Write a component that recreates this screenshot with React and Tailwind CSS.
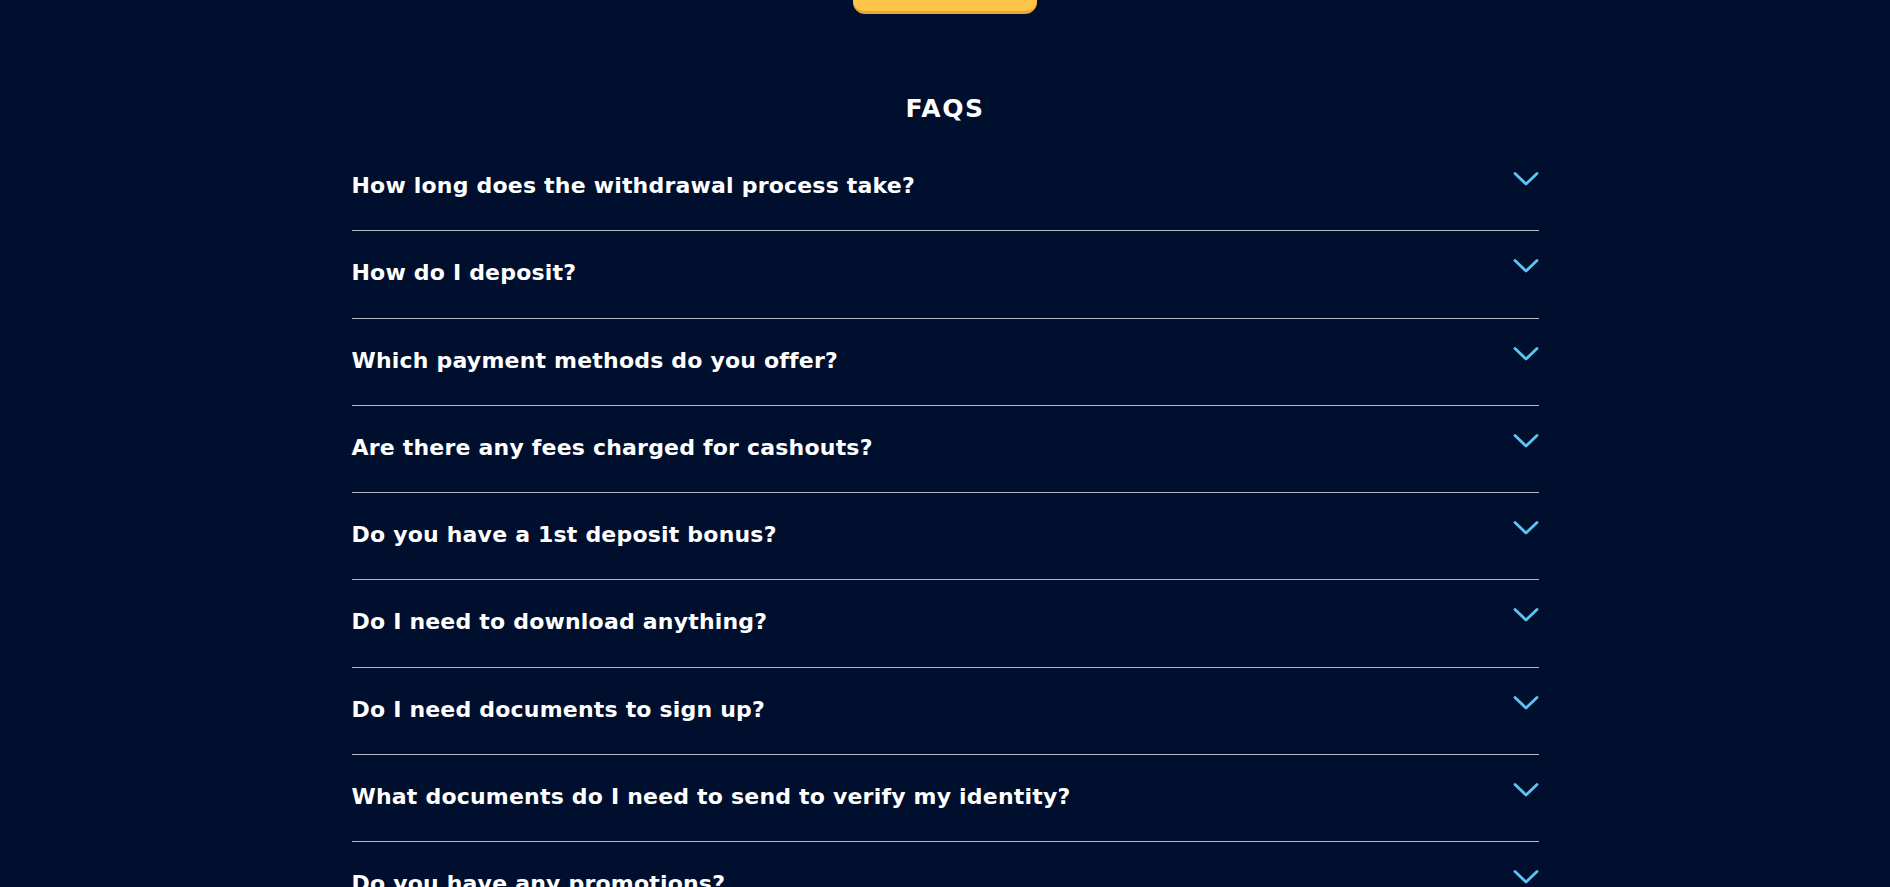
import React, { useState } from 'react';

const questions = [
  'How long does the withdrawal process take?',
  'How do I deposit?',
  'Which payment methods do you offer?',
  'Are there any fees charged for cashouts?',
  'Do you have a 1st deposit bonus?',
  'Do I need to download anything?',
  'Do I need documents to sign up?',
  'What documents do I need to send to verify my identity?',
  'Do you have any promotions?',
  'How do I contact customer support?',
];

const Chevron = () => (
  <svg width="26" height="16" viewBox="0 0 26 16" fill="none" className="shrink-0">
    <path d="M2 2.5 L13 13 L24 2.5" stroke="#5cc6f2" strokeWidth="2.8" strokeLinecap="round" strokeLinejoin="round" />
  </svg>
);

const FaqItem = ({ question }) => {
  const [open, setOpen] = useState(false);
  return (
    <div className="border-b border-[#b3b7c2]">
      <button
        onClick={() => setOpen(!open)}
        className="w-full flex items-start justify-between text-left pt-[26px] pb-[28.3px]"
      >
        <span className="text-[22px] leading-[32px] font-bold tracking-[0.2px] text-white">{question}</span>
        <span className="mt-[1px]">
          <Chevron />
        </span>
      </button>
    </div>
  );
};

export default function App() {
  return (
    <div className="min-h-screen bg-[#000f2e] font-['DejaVu_Sans',sans-serif]">
      <div className="flex justify-center">
        <div className="w-[184px] h-[14px] bg-[#fec548] border-b-[3px] border-[#e7a63a] rounded-b-[12px]" />
      </div>
      <div className="w-[1187px] mx-auto">
        <h2 className="mt-[80px] text-center text-[25px] leading-[30px] font-bold tracking-[1.5px] text-white">FAQS</h2>
        <div className="mt-[20px]">
          {questions.map((q) => (
            <FaqItem key={q} question={q} />
          ))}
        </div>
      </div>
    </div>
  );
}
